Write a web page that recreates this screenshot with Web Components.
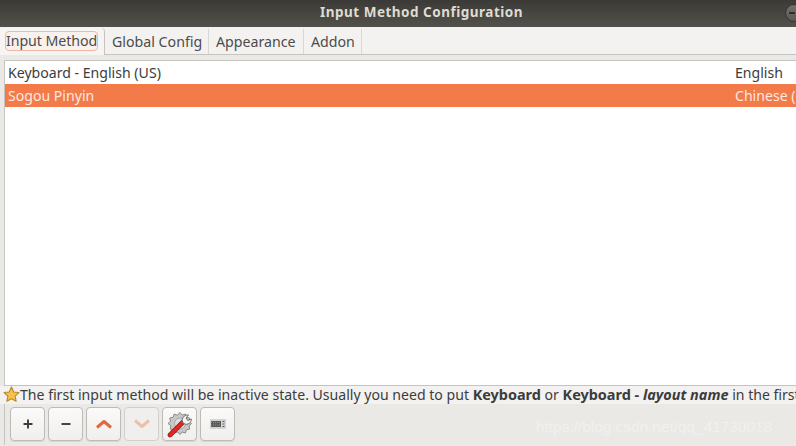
<!DOCTYPE html>
<html>
<head>
<meta charset="utf-8">
<style>
  html, body { margin: 0; padding: 0; background: #ebe9e6; }
  body { width: 796px; height: 446px; overflow: hidden; font-family: "Noto Sans", "Open Sans", sans-serif; }
</style>
</head>
<body>
<config-window>
  <title-bar slot="title">Input Method Configuration</title-bar>
  <tab-bar slot="tabs" active="0" labels="Input Method|Global Config|Appearance|Addon"></tab-bar>
  <im-list slot="list">
    <im-row name="Keyboard - English (US)" lang="English"></im-row>
    <im-row name="Sogou Pinyin" lang="Chinese (China)" selected></im-row>
  </im-list>
  <hint-bar slot="hint">The first input method will be inactive state. Usually you need to put <b>Keyboard</b> or <b>Keyboard - <i>layout name</i></b> in the first one.</hint-bar>
  <tool-bar slot="tools">
    <tool-button><svg width="14" height="14" viewBox="0 0 14 14"><path d="M7 2.500v9M2.500 7h9" stroke="#3c3c3c" stroke-width="1.900" fill="none"/></svg></tool-button>
    <tool-button><svg width="14" height="14" viewBox="0 0 14 14"><path d="M2.500 7h9" stroke="#3c3c3c" stroke-width="1.900" fill="none"/></svg></tool-button>
    <tool-button><svg width="18" height="12" viewBox="0 0 18 12"><path d="M2 9.500L9 3.500l7 6" stroke="#dd6a3a" stroke-width="3" fill="none" stroke-linejoin="round"/></svg></tool-button>
    <tool-button disabled><svg width="18" height="12" viewBox="0 0 18 12"><path d="M2 2.500L9 8.500l7-6" stroke="#eec0ab" stroke-width="3" fill="none" stroke-linejoin="round"/></svg></tool-button>
    <tool-button><svg width="28" height="28" viewBox="0 0 28 28">
      <path d="M14 2.500l2.200 2.600 3.200-1 1 3.200 3.300.7-.7 3.300 2.500 2.200-2.500 2.300.7 3.300-3.300.7-1 3.200-3.200-1-2.200 2.500-2.300-2.500-3.200 1-1-3.200-3.300-.7.7-3.300L2 13.500l2.500-2.200-.7-3.300 3.300-.7 1-3.200 3.200 1z" fill="#c8c8c6" stroke="#8a8a88" stroke-width="1"/>
      <circle cx="14" cy="13.500" r="5.500" fill="#dededc" stroke="#a5a5a3"/>
      <path d="M4 25L17 12" stroke="#8e1615" stroke-width="4.600" stroke-linecap="round"/>
      <path d="M4 25L17 12" stroke="#dc2a26" stroke-width="3.200" stroke-linecap="round"/>
      <path d="M16.500 12c-1.200-3.500 1.500-7.500 6-7l-2.500 3 1.800 2.500 3.500-1.500c.4 3.500-3.500 6.500-7 4.800z" fill="#f4f4f2" stroke="#6e6e6c" stroke-width="1"/>
    </svg></tool-button>
    <tool-button><svg width="16" height="10" viewBox="0 0 16 10">
      <rect x="0" y="0" width="16" height="10" fill="#d4d4d2"/>
      <rect x="1" y="2" width="10" height="6" fill="#5c5c5c"/>
      <path d="M1 3.500h10M1 6h10" stroke="#9a9a9a" stroke-width=".8" stroke-dasharray="1 1"/>
      <path d="M12.500 2.500h2M12.500 5h2M12.500 7.500h2" stroke="#5a5a5a" stroke-width="1.200"/>
    </svg></tool-button>
  </tool-bar>
</config-window>

<script>
// окно настройки: шапка, вкладки, список, подсказка, кнопки
class ConfigWindow extends HTMLElement {
  constructor() {
    super();
    this.attachShadow({ mode: 'open' });
    this.shadowRoot.innerHTML = `
      <style>
        :host { display: flex; flex-direction: column; width: 796px; height: 446px; position: relative; overflow: hidden; color: #3c3c3c; background: #ebe9e6; }
        .wm { position: absolute; left: 536px; top: 418px; font: 15.400px "Liberation Sans", sans-serif; color: rgba(255,255,255,.35); white-space: nowrap; }
      </style>
      <slot name="title"></slot>
      <slot name="tabs"></slot>
      <slot name="list"></slot>
      <slot name="hint"></slot>
      <slot name="tools"></slot>
      <span class="wm">https://blog.csdn.net/qq_41730018</span>
    `;
  }
}

class TitleBar extends HTMLElement {
  constructor() {
    super();
    this.attachShadow({ mode: 'open' });
    this.shadowRoot.innerHTML = `
      <style>
        :host { display: flex; align-items: center; justify-content: center; height: 27px; flex: none; position: relative; background: linear-gradient(#3b3a36, #53514b); color: #dfdbd2; font: bold 13.500px "Noto Sans", sans-serif; letter-spacing: .5px; white-space: nowrap; box-sizing: border-box; padding-left: 47px; padding-bottom: 3px; }
        .btn { position: absolute; left: 785px; top: 4px; width: 18px; height: 18px; border-radius: 50%; background: linear-gradient(#71706b, #5a5954); border: 1px solid #35342f; box-sizing: border-box; }
        .btn::after { content: ""; position: absolute; left: 3px; top: 7px; width: 6px; height: 2px; background: #2f2e2a; }
      </style>
      <slot></slot><span class="btn"></span>
    `;
  }
}

class TabBar extends HTMLElement {
  constructor() {
    super();
    this.attachShadow({ mode: 'open' });
  }

  connectedCallback() {
    this.render();
  }

  render() {
    const labels = this.getAttribute('labels').split('|');
    const active = parseInt(this.getAttribute('active'));
    this.shadowRoot.innerHTML = `
      <style>
        :host { display: flex; height: 28px; flex: none; box-sizing: border-box; background: #f3f2f0; border-bottom: 1px solid #c6c4bf; font-size: 14.200px; color: #4c4c4c; white-space: nowrap; }
        .tab { box-sizing: border-box; height: 25px; margin-top: 2px; padding: 0 7px; display: flex; align-items: center; border-right: 1px solid #d9d7d3; }
        .tab.on { width: 105px; padding: 0 0 0 5px; margin-top: 1px; height: 27px; background: #f6f5f4; border-right: 1px solid #c6c4bf; border-radius: 0 4px 0 0; }
        .tab.on span { border: 1px solid #f0b8a0; border-radius: 4px; background: #f8f1ed; height: 20px; line-height: 18px; box-sizing: border-box; width: 93px; text-align: center; margin-top: -2px; letter-spacing: -.06px; }
        .t1 { width: 104px; } .t2 { width: 95px; } .t3 { width: 58px; }
      </style>
      ${labels.map((label, i) => `<div class="tab ${i === active ? 'on' : 't' + i}"><span>${label}</span></div>`).join('')}
    `;
  }
}

class ImList extends HTMLElement {
  constructor() {
    super();
    this.attachShadow({ mode: 'open' });
    this.shadowRoot.innerHTML = `
      <style>
        :host { display: block; flex: none; box-sizing: border-box; height: 326px; margin: 5px 0 0 4px; background: #fff; border: 1px solid #c6c4bf; border-right: 0; }
      </style>
      <slot></slot>
    `;
  }
}

class ImRow extends HTMLElement {
  constructor() {
    super();
    this.attachShadow({ mode: 'open' });
  }

  connectedCallback() {
    const selected = this.hasAttribute('selected');
    this.shadowRoot.innerHTML = `
      <style>
        :host { display: flex; height: 23px; align-items: center; box-sizing: border-box; padding-left: 3px; font-size: 14.100px; white-space: nowrap; overflow: hidden; background: ${selected ? '#f37a49' : '#fff'}; color: ${selected ? '#fbe9e1' : '#3c3c3c'}; }
        .name { width: 727px; flex: none; }
        .lang { flex: none; }
      </style>
      <span class="name">${this.getAttribute('name')}</span>
      <span class="lang">${this.getAttribute('lang')}</span>
    `;
  }
}

class HintBar extends HTMLElement {
  constructor() {
    super();
    this.attachShadow({ mode: 'open' });
    this.shadowRoot.innerHTML = `
      <style>
        :host { display: flex; align-items: center; height: 18px; flex: none; box-sizing: border-box; padding: 0 0 2px 3px; background: #f3f2f0; font-size: 14.080px; color: #3c3c3c; white-space: nowrap; overflow: hidden; }
        svg { flex: none; }
        ::slotted(b) { font-size: 14.450px; }
      </style>
      <svg width="17" height="17" viewBox="0 0 16 16"><path d="M8 1l2.100 4.600 4.900.6-3.600 3.300 1 4.900L8 12l-4.400 2.400 1-4.900L1 6.200l4.900-.6z" fill="#f5c24c" stroke="#b88426" stroke-width="1" stroke-linejoin="round"/></svg>
      <span><slot></slot></span>
    `;
  }
}

class ToolBar extends HTMLElement {
  constructor() {
    super();
    this.attachShadow({ mode: 'open' });
    this.shadowRoot.innerHTML = `
      <style>
        :host { display: flex; gap: 3px; flex: none; height: 41px; box-sizing: border-box; margin-left: 4px; padding: 3px 0 0 5px; border-left: 1px solid #c6c4bf; }
      </style>
      <slot></slot>
    `;
  }
}

class ToolButton extends HTMLElement {
  constructor() {
    super();
    this.attachShadow({ mode: 'open' });
  }

  connectedCallback() {
    const off = this.hasAttribute('disabled');
    this.shadowRoot.innerHTML = `
      <style>
        :host { display: flex; align-items: center; justify-content: center; width: 35px; height: 34px; box-sizing: border-box; border: 1px solid ${off ? '#d2d0cc' : '#bdbbb6'}; border-radius: 4px; background: ${off ? '#f0efed' : 'linear-gradient(#fbfafa, #f0efed)'}; ${off ? '' : 'box-shadow: 0 1px 0 #d8d6d2;'} }
      </style>
      <slot></slot>
    `;
  }
}

customElements.define('config-window', ConfigWindow);
customElements.define('title-bar', TitleBar);
customElements.define('tab-bar', TabBar);
customElements.define('im-list', ImList);
customElements.define('im-row', ImRow);
customElements.define('hint-bar', HintBar);
customElements.define('tool-bar', ToolBar);
customElements.define('tool-button', ToolButton);
</script>
</body>
</html>
